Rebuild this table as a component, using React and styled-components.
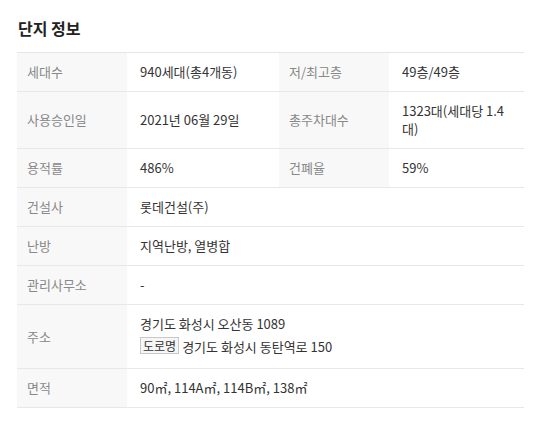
import React from "react";
import styled, { createGlobalStyle } from "styled-components";

const Global = createGlobalStyle`
  html, body { margin: 0; padding: 0; background: #fff; }
  body { font-family: "Noto Sans CJK KR", "Noto Sans", sans-serif; }
`;

const Page = styled.div`
  padding: 16px 10px 0 17px;
  width: 507px;
`;

const Title = styled.h2`
  margin: 0 0 12px 1px;
  font-size: 16px;
  line-height: 24px;
  font-weight: 700;
  color: #222;
`;

const Table = styled.table`
  width: 507px;
  border-collapse: collapse;
  table-layout: fixed;
  border-top: 1px solid #e5e5e5;
  font-size: 13px;
`;

const Row = styled.tr`
  border-bottom: 1px solid #e8e8e8;
`;

const Label = styled.th`
  width: ${(p) => p.$w}px;
  box-sizing: border-box;
  background: #f8f8f8;
  color: #888;
  font-weight: 400;
  text-align: left;
  padding: 10px 10px;
  line-height: 18px;
  vertical-align: middle;
`;

const Value = styled.td`
  box-sizing: border-box;
  color: #333;
  padding: 10px 13px;
  line-height: 18px;
  vertical-align: middle;
  word-break: normal;
`;

const Line = styled.div`
  line-height: ${(p) => p.$h || 18}px;
  margin-top: ${(p) => p.$mt || 0}px;
`;

const Badge = styled.span`
  display: inline-block;
  border: 1px solid #c8c8c8;
  background: #f6f6f6;
  color: #333;
  font-size: 12px;
  line-height: 15px;
  padding: 0 2px;
  margin-right: 3px;
  vertical-align: 1px;
`;

const pairs = [
  ["세대수", "940세대(총4개동)", "저/최고층", "49층/49층"],
  ["사용승인일", "2021년 06월 29일", "총주차대수", "1323대(세대당 1.4대)"],
  ["용적률", "486%", "건폐율", "59%"],
];

const singles = [
  ["건설사", "롯데건설(주)"],
  ["난방", "지역난방, 열병합"],
  ["관리사무소", "-"],
];

export default function App() {
  return (
    <>
      <Global />
      <Page>
        <Title>단지 정보</Title>
        <Table>
          <colgroup>
            <col style={{ width: 110 }} />
            <col style={{ width: 152 }} />
            <col style={{ width: 110 }} />
            <col style={{ width: 135 }} />
          </colgroup>
          <tbody>
            {pairs.map(([a, b, c, d]) => (
              <Row key={a}>
                <Label $w={110}>{a}</Label>
                <Value>{b}</Value>
                <Label $w={110}>{c}</Label>
                <Value>{d}</Value>
              </Row>
            ))}
            {singles.map(([a, b]) => (
              <Row key={a}>
                <Label $w={110}>{a}</Label>
                <Value colSpan={3}>{b}</Value>
              </Row>
            ))}
            <Row>
              <Label $w={110}>주소</Label>
              <Value colSpan={3}>
                <Line>경기도 화성시 오산동 1089</Line>
                <Line $h={23} $mt={2}>
                  <Badge>도로명</Badge>경기도 화성시 동탄역로 150
                </Line>
              </Value>
            </Row>
            <Row>
              <Label $w={110}>면적</Label>
              <Value colSpan={3}>90㎡, 114A㎡, 114B㎡, 138㎡</Value>
            </Row>
          </tbody>
        </Table>
      </Page>
    </>
  );
}
